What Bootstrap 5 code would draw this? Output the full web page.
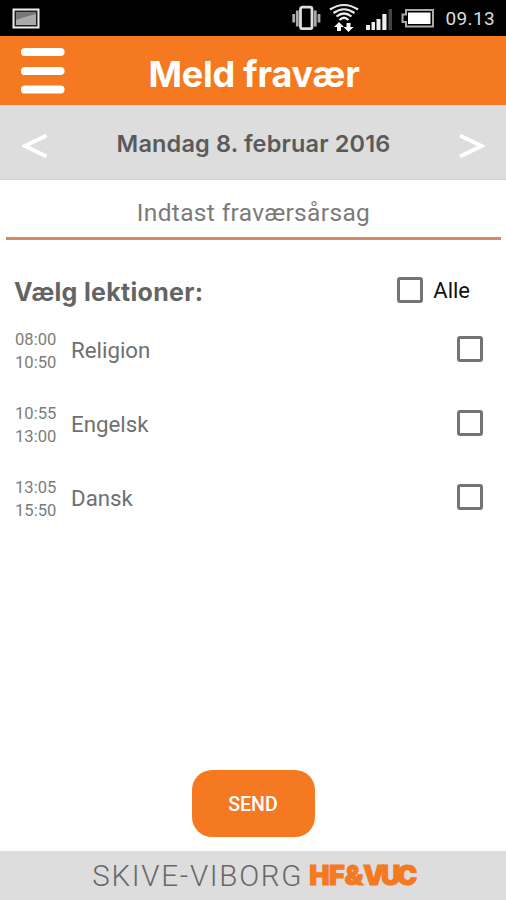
<!DOCTYPE html>
<html lang="da">
<head>
<meta charset="utf-8">
<meta name="viewport" content="width=device-width, initial-scale=1">
<title>Meld fravær</title>
<link href="https://cdn.jsdelivr.net/npm/bootstrap@5.3.0/dist/css/bootstrap.min.css" rel="stylesheet">
<style>
body { font-family: Roboto, "Liberation Sans", sans-serif; color: #606060; background: #fff; }
.screen { height: 900px; }
.status { height: 36px; background: #000; color: #dcdcdc; padding: 0 11px 0 12px; }
.status svg { display: block; }
.clock { font-size: 19px; line-height: 38px; padding-top: 2px; letter-spacing: .35px; margin-left: 10px; }
.topbar { height: 69px; background: #f47920; color: #fff; display: grid; grid-template-columns: 84px 1fr 82px; }
.menu-btn { width: 44px; height: 47px; margin-left: 21px; }
.title-text { font: 700 36px/69px Inter, sans-serif; letter-spacing: -.2px; padding-top: 4px; height: 69px; }
.datebar { height: 75px; background: #ddd; border-bottom: 1px solid #d2d2d2; padding: 7px 21px 0 22px; }
.date-text { font: 600 23.5px/66px Inter, sans-serif; letter-spacing: .15px; color: #5a5a5a; padding-bottom: 4px; }
.reason { height: 60px; margin: 0 5px 0 6px; border: 0; border-bottom: 3px solid #d5895d; border-radius: 0; font-size: 24.5px; text-align: center; padding: 7px 0 0; letter-spacing: .35px; background: #fff; color: #777; }
.reason::placeholder { color: #7b7b7b; opacity: 1; }
.choose { height: 73px; padding: 27px 36px 0 14px; }
.choose-title { font: 700 25px/50px Inter, sans-serif; letter-spacing: .3px; color: #646464; }
.all-label { font-size: 22px; color: #111; line-height: 48px; margin-left: 10px; }
.form-check-input.box { width: 26px; height: 26px; margin: 0; border: 3px solid #747474; border-radius: 3px; background: #fff; flex: none; }
.choose .form-check-input.box { margin-top: 10px; }
.lesson { height: 74.2px; padding: 0 23px 0 15px; }
.times { width: 56px; font-size: 16.6px; color: #7c7c7c; line-height: 23px; padding-top: 15px; }
.subject { font-size: 22.3px; color: #707070; line-height: 30px; padding-top: 22px; }
.lesson .box { margin-top: 23px; }
.send { width: 123px; height: 67px; border-radius: 20px; background: #f47920; color: #fff; border: 0; font-size: 19.5px; font-weight: 500; padding-top: 8px; margin-bottom: 14px; }
.footer-bar { height: 49px; background: #ddd; }
.place { font: 300 29.5px/50px Roboto, sans-serif; letter-spacing: 1.7px; color: #686868; }
.brand-mark { font: 900 27px/50px Inter, sans-serif; color: #f47920; -webkit-text-stroke: 1px #f47920; letter-spacing: -.3px; margin-left: 6px; }
.brand-tight { letter-spacing: -3.5px; }
</style>
</head>
<body>
<main class="screen d-flex flex-column overflow-hidden">
  <div class="status d-flex align-items-center">
    <svg width="28" height="36" viewBox="0 0 28 36"><rect x="1.5" y="9.5" width="25" height="18" fill="#222" stroke="#eee" stroke-width="2"/><rect x="4" y="12" width="20" height="13" fill="#777"/><path d="M4 20L13 17L24 14V25H4Z" fill="#aaa"/></svg>
    <svg class="ms-auto" width="146" height="36" viewBox="290 0 146 36">
      <g stroke="#aaa" stroke-width="2.8"><path d="M293.700 14V22.500M297.300 10.500V26.500M315.300 10.500V26.500M319 14V22.500"/></g>
      <rect x="300.500" y="7.2" width="11.500" height="21.5" rx="2" fill="none" stroke="#ddd" stroke-width="2.8"/>
      <g fill="none" stroke="#e8e8e8" stroke-width="2.2"><path d="M330 9.5Q344 .5 358 9.5"/><path d="M333.5 13Q344 5.5 354.500 13"/><path d="M336.500 16.500Q344 10.500 351.500 16.500"/><path d="M339.500 20Q344 15.500 348.500 20"/></g>
      <path d="M339 22L344 27H341V31H337V27H334ZM348.500 32L343.500 27H346.500V23H350.500V27H353.500Z" fill="#fff"/>
      <path d="M366 25h4v5h-4zM371.500 22h3.500v8h-3.500zM376.500 19h4v11h-4zM382.300 14h4.200v16h-4.200z" fill="#eee"/><path d="M388.500 9h3.500v21h-3.500z" fill="#444"/>
      <path d="M406 10H433V26.500H406V22H402.500V14.500H406Z" fill="none" stroke="#aaa" stroke-width="2"/><rect x="408" y="12.500" width="22.500" height="11.500" fill="#fff"/>
    </svg>
    <span class="clock">09.13</span>
  </div>
  <header class="topbar align-items-center">
    <button class="menu-btn btn border-0 p-0" aria-label="Menu"><svg class="d-block" width="44" height="47" viewBox="0 0 44 47"><path d="M4 5H39.500M4 24H39.500M4 42.500H39.500" stroke="#fff" stroke-width="8.200" stroke-linecap="round"/></svg></button>
    <h1 class="title-text text-center text-nowrap mb-0">Meld fravær</h1>
  </header>
  <div class="datebar d-flex align-items-center justify-content-between">
    <svg width="26" height="26" viewBox="0 0 26 26"><path d="M24.500 2.500L3 13L24.500 23.500" fill="none" stroke="#fff" stroke-width="4"/></svg>
    <span class="date-text text-nowrap">Mandag 8. februar 2016</span>
    <svg width="26" height="26" viewBox="0 0 26 26"><path d="M1 2.500L22.500 13L1 23.500" fill="none" stroke="#fff" stroke-width="4"/></svg>
  </div>
  <input class="reason" placeholder="Indtast fraværsårsag" aria-label="Indtast fraværsårsag">
  <div class="choose d-flex justify-content-between">
    <h2 class="choose-title mb-0">Vælg lektioner:</h2>
    <label class="d-flex"><input class="form-check-input box" type="checkbox"><span class="all-label">Alle</span></label>
  </div>
  <section>
    <label class="lesson d-flex"><span class="times">08:00<br>10:50</span><span class="subject flex-grow-1">Religion</span><input class="form-check-input box" type="checkbox"></label>
    <label class="lesson d-flex"><span class="times">10:55<br>13:00</span><span class="subject flex-grow-1">Engelsk</span><input class="form-check-input box" type="checkbox"></label>
    <label class="lesson d-flex"><span class="times">13:05<br>15:50</span><span class="subject flex-grow-1">Dansk</span><input class="form-check-input box" type="checkbox"></label>
  </section>
  <button class="send btn mt-auto align-self-center">SEND</button>
  <footer class="footer-bar d-flex justify-content-center"><span class="place">SKIVE-VIBORG</span><span class="brand-mark">HF&amp;<span class="brand-tight">VUC</span></span></footer>
</main>
<script src="https://cdn.jsdelivr.net/npm/bootstrap@5.3.0/dist/js/bootstrap.bundle.min.js"></script>
</body>
</html>
